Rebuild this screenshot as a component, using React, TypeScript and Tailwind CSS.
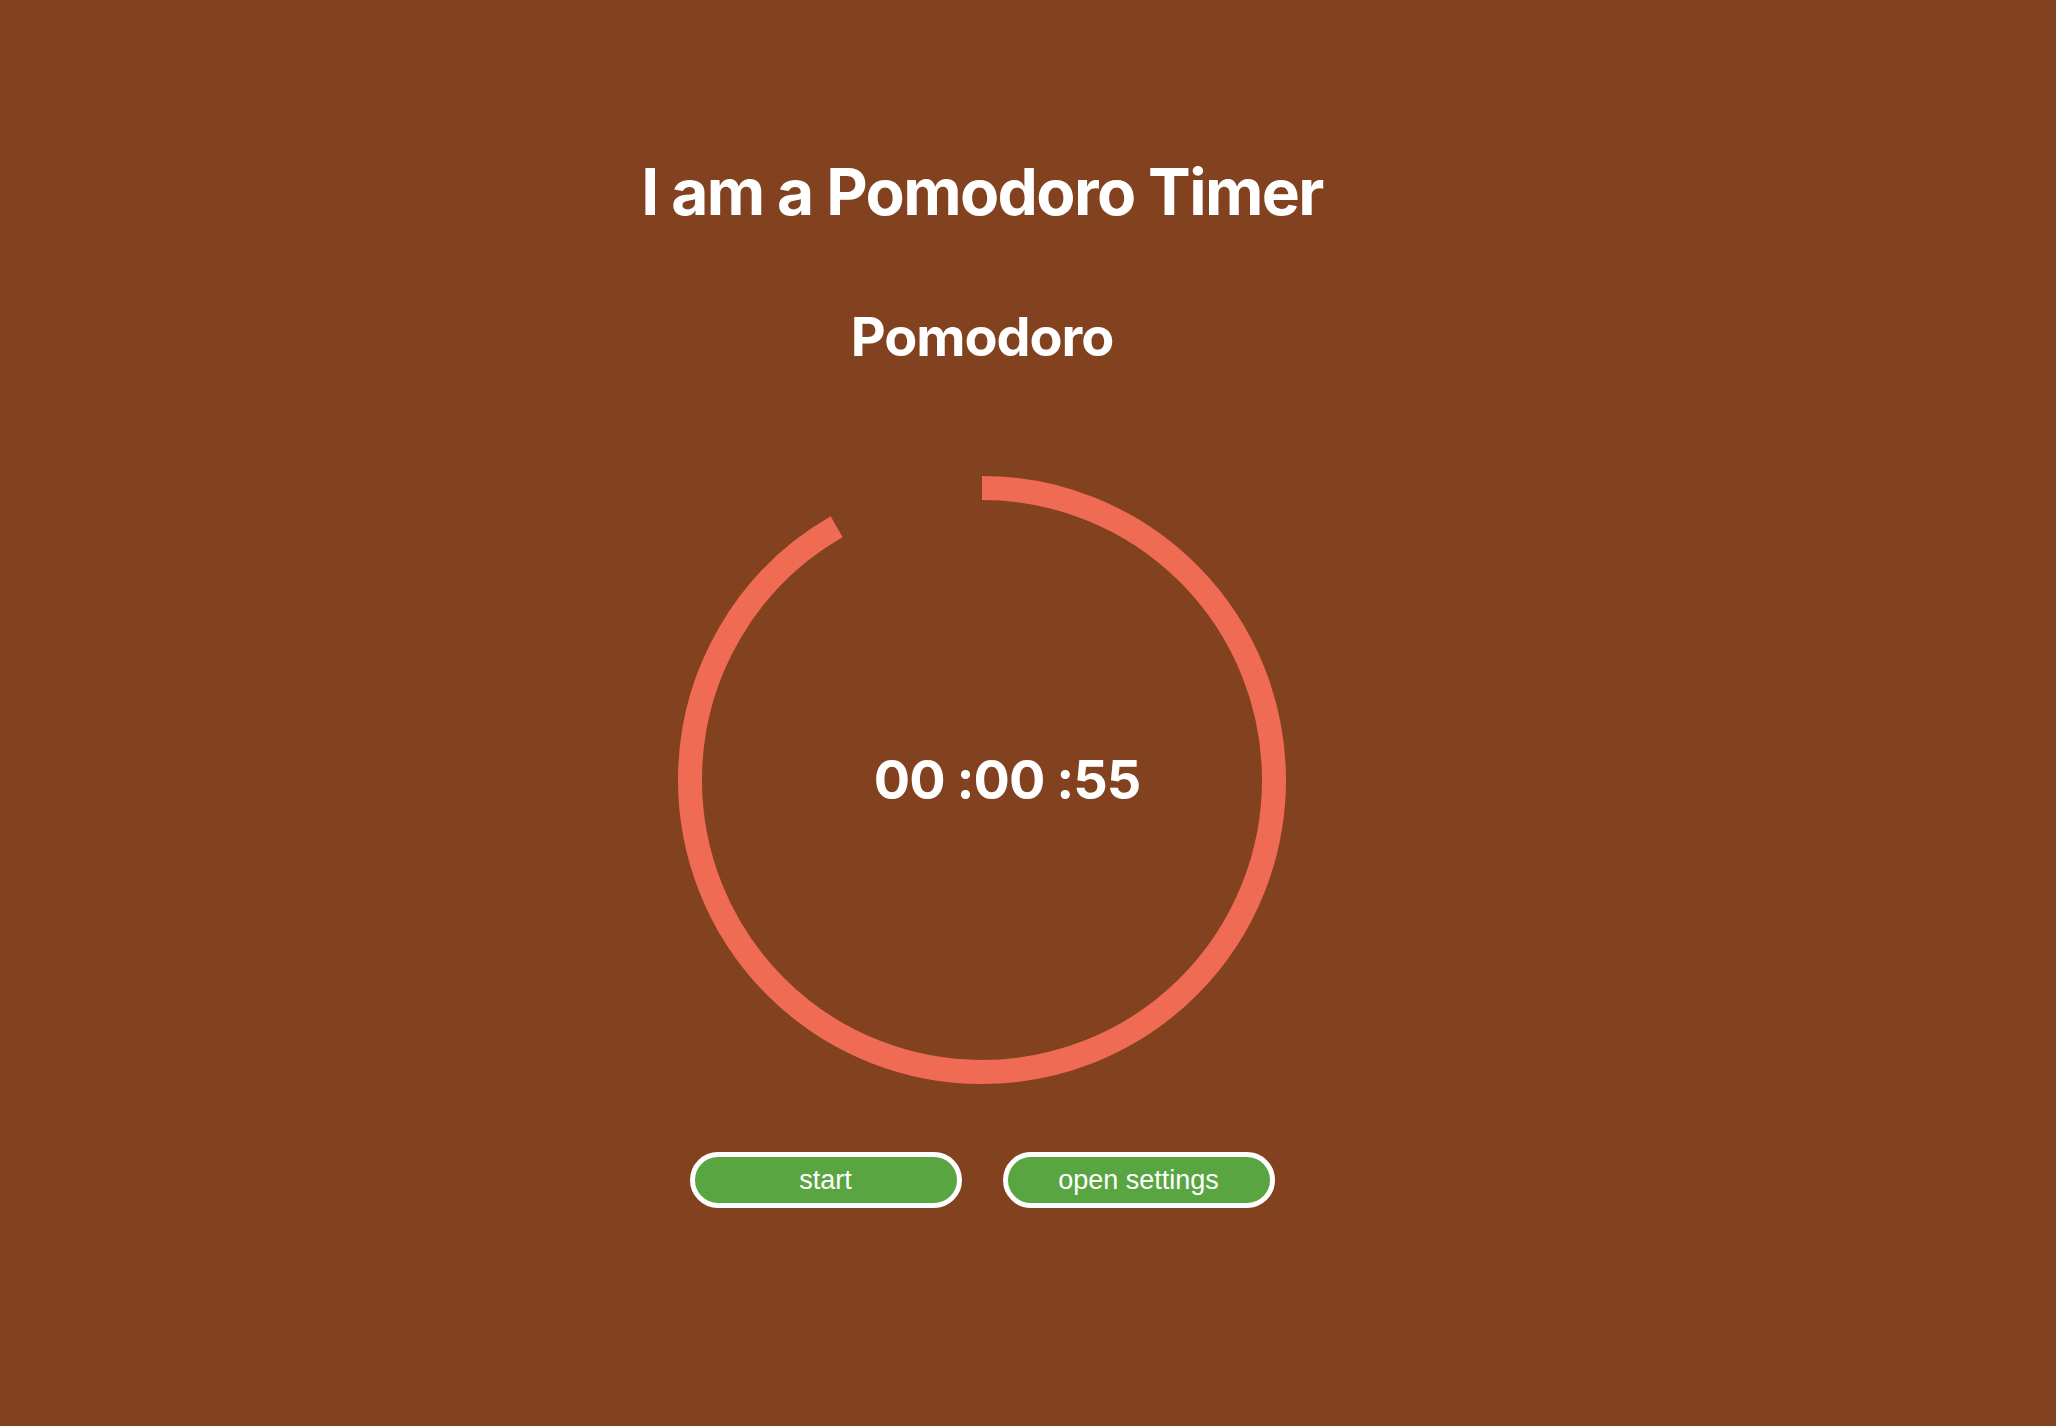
import React from "react";

const RADIUS = 292;
const STROKE = 24;
const SIZE = (RADIUS + STROKE / 2) * 2;

function TimerRing({ remaining, total }: { remaining: number; total: number }) {
  const circumference = 2 * Math.PI * RADIUS;
  const dash = (circumference * remaining) / total;
  return (
    <svg width={SIZE} height={SIZE} viewBox={`0 0 ${SIZE} ${SIZE}`} className="block">
      <circle
        cx={SIZE / 2}
        cy={SIZE / 2}
        r={RADIUS}
        fill="none"
        stroke="#ef6b53"
        strokeWidth={STROKE}
        strokeLinecap="butt"
        strokeDasharray={`${dash} ${circumference}`}
        transform={`rotate(-90 ${SIZE / 2} ${SIZE / 2})`}
      />
    </svg>
  );
}

export default function App() {
  return (
    <div className="flex min-h-screen flex-col items-center bg-[#82421f] pr-[92px] pt-[160px] text-white [font-family:Inter,'Noto_Sans',sans-serif]">
      <h1 className="text-[64px] font-bold leading-none tracking-[-0.025em]">I am a Pomodoro Timer</h1>
      <h2 className="mt-[86px] text-[54px] font-bold leading-none tracking-[-0.02em]">Pomodoro</h2>

      <div className="relative mt-[112px]">
        <TimerRing remaining={55} total={60} />
        <div className="absolute inset-0 flex items-center justify-center pl-[50px]">
          <span className="text-[54px] font-bold leading-none tracking-[-0.018em]">00 :00 :55</span>
        </div>
      </div>

      <div className="mt-[68px] flex gap-[41px] [font-family:'Liberation_Sans',Arial,sans-serif]">
        <button className="h-[56px] w-[272px] rounded-full border-[5px] border-white bg-[#58a541] text-[27px] leading-none text-white">
          start
        </button>
        <button className="h-[56px] w-[272px] rounded-full border-[5px] border-white bg-[#58a541] text-[27px] leading-none text-white">
          open settings
        </button>
      </div>
    </div>
  );
}
